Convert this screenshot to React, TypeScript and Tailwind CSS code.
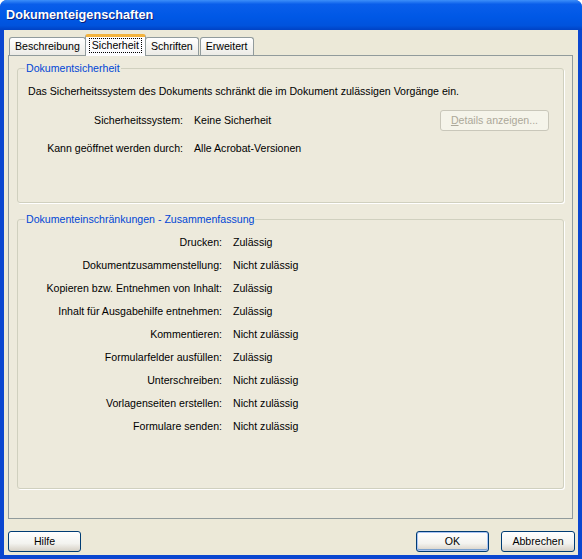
const font = "font-['Liberation_Sans',Arial,sans-serif]";

const summary: [string, string][] = [
  ["Drucken:", "Zulässig"],
  ["Dokumentzusammenstellung:", "Nicht zulässig"],
  ["Kopieren bzw. Entnehmen von Inhalt:", "Zulässig"],
  ["Inhalt für Ausgabehilfe entnehmen:", "Zulässig"],
  ["Kommentieren:", "Nicht zulässig"],
  ["Formularfelder ausfüllen:", "Zulässig"],
  ["Unterschreiben:", "Nicht zulässig"],
  ["Vorlagenseiten erstellen:", "Nicht zulässig"],
  ["Formulare senden:", "Nicht zulässig"],
];

function Tab({ label, active }: { label: string; active?: boolean }) {
  if (active) {
    return (
      <div className="relative z-10 -mb-px -mx-[2px] h-[22px] border-x border-[#919B9C] border-t-[3px] border-t-[#F3B33D] rounded-t-[3px] bg-[#FCFCFE] px-[3px] pt-[1px]">
        <span className="block border border-dotted border-black px-[2px] leading-[13px]">
          {label}
        </span>
      </div>
    );
  }
  return (
    <div className="h-[18px] border border-b-0 border-[#919B9C] rounded-t-[3px] bg-[linear-gradient(to_bottom,#FFFFFF,#ECEBE6)] px-[5px] pt-[2px] leading-[13px]">
      {label}
    </div>
  );
}

function Button({
  label,
  primary,
  disabled,
  className = "",
}: {
  label: string;
  primary?: boolean;
  disabled?: boolean;
  className?: string;
}) {
  if (disabled) {
    return (
      <div
        className={`flex h-[21px] items-center justify-center rounded-[3px] border border-[#C9C7BA] bg-[#F5F4EA] text-[#ACA899] ${className}`}
      >
        <span>
          <span className="underline">D</span>etails anzeigen...
        </span>
      </div>
    );
  }
  return (
    <div
      className={`flex h-[21px] items-center justify-center rounded-[3px] border border-[#003C74] bg-[linear-gradient(to_bottom,#FFFFFF_0%,#F3F3EF_60%,#D6D0C5_100%)] ${
        primary ? "shadow-[inset_0_0_0_1px_#A9C4F4,inset_0_-1px_0_1px_#7DA2CE]" : ""
      } ${className}`}
    >
      {label}
    </div>
  );
}

export default function App() {
  return (
    <div
      className={`${font} flex h-[559px] w-[582px] flex-col overflow-hidden rounded-t-[7px] bg-[#0A46D0] text-[10.6px] text-black`}
    >
      <div className="flex h-[30px] shrink-0 items-center bg-[linear-gradient(to_bottom,#3D8FF9_0%,#0A5EEA_14%,#0058E6_55%,#0053DD_85%,#0042C4_100%)] pl-[6px] pt-[1px]">
        <span className="text-[12.7px] font-bold text-white [text-shadow:1px_1px_0_#0A1F7A]">
          Dokumenteigenschaften
        </span>
      </div>

      <div className="mx-[4px] mb-[4px] flex flex-1 flex-col bg-[#ECE9D8] pl-[4px] pr-[5px]">
        <div className="flex h-[25px] items-end gap-[1px] pl-[1px]">
          <Tab label="Beschreibung" />
          <Tab label="Sicherheit" active />
          <Tab label="Schriften" />
          <Tab label="Erweitert" />
        </div>

        <div className="flex h-[464px] flex-col border border-[#919B9C] bg-[#EDEADC] px-[8px] pt-[6px]">
          <fieldset className="h-[141px] rounded-[3px] border border-[#D0D0BF] px-[10px] shadow-[1px_1px_0_#FFFFFF]">
            <legend className="ml-[-3px] px-[1px] leading-[13px] text-[#0046D5]">
              Dokumentsicherheit
            </legend>
            <p className="mt-[10px] leading-[13px]">
              Das Sicherheitssystem des Dokuments schränkt die im Dokument zulässigen Vorgänge ein.
            </p>
            <div className="mt-[12px] flex h-[21px] items-center">
              <span className="w-[155px] text-right">Sicherheitssystem:</span>
              <span className="ml-[11px]">Keine Sicherheit</span>
              <Button label="Details anzeigen..." disabled className="ml-auto mr-[4px] w-[109px]" />
            </div>
            <div className="mt-[7px] flex h-[21px] items-center">
              <span className="w-[155px] text-right">Kann geöffnet werden durch:</span>
              <span className="ml-[11px]">Alle Acrobat-Versionen</span>
            </div>
          </fieldset>

          <fieldset className="mt-[10px] h-[276px] rounded-[3px] border border-[#D0D0BF] shadow-[1px_1px_0_#FFFFFF]">
            <legend className="ml-[7px] px-[1px] leading-[13px] text-[#0046D5]">
              Dokumenteinschränkungen - Zusammenfassung
            </legend>
            <div className="mt-[5px] flex flex-col">
              {summary.map(([label, value]) => (
                <div key={label} className="flex h-[23px] items-center">
                  <span className="w-[204px] text-right">{label}</span>
                  <span className="ml-[11px]">{value}</span>
                </div>
              ))}
            </div>
          </fieldset>
        </div>

        <div className="-mr-[2px] mt-[12px] flex">
          <Button label="Hilfe" className="w-[73px]" />
          <Button label="OK" primary className="ml-auto w-[73px]" />
          <Button label="Abbrechen" className="ml-[12px] w-[74px]" />
        </div>
      </div>
    </div>
  );
}
